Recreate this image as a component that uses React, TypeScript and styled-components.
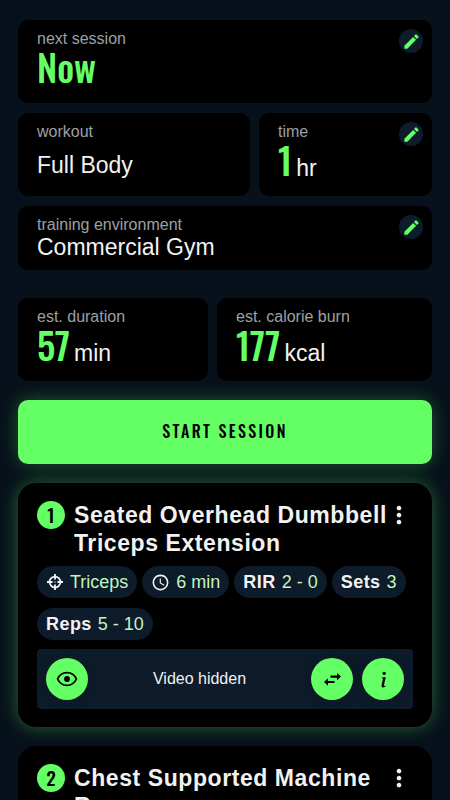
import React from "react";
import styled, { createGlobalStyle, css } from "styled-components";
import { MdEdit, MdSchedule, MdMoreVert } from "react-icons/md";
import { BsInfoLg } from "react-icons/bs";

const GREEN = "#64ff64";
const NAVY = "#0d1b2a";
const display = css`
  font-family: Oswald, "Liberation Sans Narrow", "DejaVu Sans Condensed", sans-serif;
`;

const GlobalStyle = createGlobalStyle`
  *, *::before, *::after { box-sizing: border-box; }
  body {
    margin: 0;
    background: #07111b;
    color: #f2f2f2;
    font-family: "Liberation Sans", Arial, sans-serif;
  }
  button { font: inherit; border: 0; padding: 0; cursor: pointer; }
  h2, p, ul { margin: 0; padding: 0; }
`;

const Page = styled.main`
  display: flex;
  flex-direction: column;
  gap: 19px;
  padding: 20px 18px;
  height: 100vh;
  overflow-x: hidden;
  overflow-y: auto;
  scrollbar-width: none;
`;

const Settings = styled.section`
  display: flex;
  flex-direction: column;
  flex: none;
  gap: 10px;
  padding-bottom: 9px;
`;

const Split = styled.div<{ $columns: string }>`
  display: grid;
  flex: none;
  grid-template-columns: ${(p) => p.$columns};
  gap: 9px;
`;

const InfoCard = styled.div<{ $compact?: boolean }>`
  display: flex;
  justify-content: space-between;
  min-height: ${(p) => (p.$compact ? 64 : 83)}px;
  padding: 9px 9px 9px 19px;
  border-radius: 10px;
  background: #000;
`;

const InfoText = styled.div`
  display: flex;
  flex-direction: column;
  flex: 1;
`;

const Label = styled.span`
  font-size: 16px;
  line-height: 20px;
  color: #9da0a6;
`;

const Value = styled.span<{ $center?: boolean }>`
  font-size: 23px;
  line-height: 24px;
  ${(p) => p.$center && "margin: auto 0;"}
`;

const Metric = styled.span`
  display: flex;
  align-items: baseline;
  gap: 4px;
  font-size: 23px;
  line-height: 20px;
`;

const Figure = styled.strong`
  ${display}
  font-size: 37px;
  line-height: 36px;
  font-weight: 500;
  color: ${GREEN};
`;

const EditButton = styled.button`
  display: grid;
  place-items: center;
  width: 24px;
  height: 24px;
  border-radius: 50%;
  background: ${NAVY};
  color: ${GREEN};
  font-size: 19px;
`;

const StartButton = styled.button`
  && { ${display} }
  flex: none;
  min-height: 64px;
  padding-bottom: 3px;
  border-radius: 10px;
  background: ${GREEN};
  color: #000;
  font-size: 16px;
  font-weight: 500;
  letter-spacing: 0.15em;
  box-shadow: 0 0 18px rgba(100, 255, 100, 0.3);
`;

const ExerciseCard = styled.article<{ $active?: boolean }>`
  flex: none;
  padding: 18px 19px;
  border-radius: 18px;
  background: #000;
  ${(p) => p.$active && "box-shadow: 0 0 18px rgba(100, 255, 100, 0.35);"}
`;

const ExerciseHeader = styled.header`
  display: flex;
  align-items: flex-start;
  gap: 9px;
`;

const NumberBadge = styled.span`
  ${display}
  display: grid;
  place-items: center;
  flex: none;
  width: 28px;
  height: 28px;
  padding-bottom: 2px;
  border-radius: 50%;
  background: ${GREEN};
  color: #000;
  font-size: 19px;
  line-height: 20px;
  font-weight: 500;
`;

const Title = styled.h2`
  flex: 1;
  font-size: 23px;
  line-height: 28px;
  font-weight: 700;
  letter-spacing: 0.025em;
`;

const MenuButton = styled.button`
  display: flex;
  align-items: center;
  justify-content: center;
  flex: none;
  width: 20px;
  height: 28px;
  margin: 0 4px 0 -9px;
  background: none;
  color: #f2f2f2;
  font-size: 28px;
  svg { flex: none; }
`;

const Chips = styled.ul`
  display: flex;
  flex-wrap: wrap;
  gap: 10px 5px;
  margin: 9px 0;
  list-style: none;
`;

const Chip = styled.li`
  display: flex;
  align-items: center;
  gap: 6px;
  height: 32px;
  padding: 0 9px;
  border-radius: 16px;
  background: ${NAVY};
  font-size: 18px;
  color: #c1f5c1;
  svg { color: #f2f2f2; }
  strong { color: #f2f2f2; letter-spacing: 0.025em; }
`;

const VideoBar = styled.div`
  display: flex;
  align-items: center;
  gap: 9px;
  padding: 9px;
  border-radius: 4px;
  background: ${NAVY};
`;

const VideoText = styled.p`
  flex: 1;
  text-align: center;
  font-size: 16px;
`;

const RoundButton = styled.button`
  display: grid;
  place-items: center;
  width: 42px;
  height: 42px;
  border-radius: 50%;
  background: ${GREEN};
  color: #000;
  font-size: 21px;
  box-shadow: 0 0 14px rgba(0, 0, 0, 0.2);
`;

const TargetIcon = () => (
  <svg width="18" height="18" viewBox="0 0 18 18" fill="none" stroke="currentColor" strokeWidth="1.8" aria-hidden="true">
    <circle cx="9" cy="9" r="5.4" />
    <path d="M9 1v5.6M9 11.4V17M1 9h5.6M11.4 9H17" />
    <circle cx="9" cy="9" r="0.7" fill="currentColor" stroke="none" />
  </svg>
);

const EyeIcon = () => (
  <svg width="22" height="16" viewBox="0 0 22 16" fill="none" stroke="currentColor" strokeWidth="1.8" aria-hidden="true">
    <path d="M1.6 8C3.4 3.9 6.8 1.7 11 1.7S18.6 3.9 20.4 8C18.6 12.1 15.2 14.3 11 14.3S3.4 12.1 1.6 8z" strokeLinejoin="round" />
    <circle cx="11" cy="8" r="2.9" fill="currentColor" stroke="none" />
  </svg>
);

const SwapIcon = () => (
  <svg width="17" height="13" viewBox="0 0 17 13" fill="currentColor" aria-hidden="true">
    <path d="M6.5 2.6H13V0l4 3.6-4 3.7V4.7H6.5zM10.5 8H4V5.3L0 9l4 3.7v-2.6h6.5z" />
  </svg>
);

const Edit = ({ label }: { label: string }) => (
  <EditButton aria-label={label}>
    <MdEdit />
  </EditButton>
);

const Header = ({ number, title }: { number: number; title: string }) => (
  <ExerciseHeader>
    <NumberBadge>{number}</NumberBadge>
    <Title>{title}</Title>
    <MenuButton aria-label="Exercise options">
      <MdMoreVert />
    </MenuButton>
  </ExerciseHeader>
);

export default function App() {
  return (
    <>
      <GlobalStyle />
      <Page>
        <Settings>
          <InfoCard>
            <InfoText>
              <Label>next session</Label>
              <Metric><Figure>Now</Figure></Metric>
            </InfoText>
            <Edit label="Edit next session" />
          </InfoCard>
          <Split $columns="232fr 173fr">
            <InfoCard>
              <InfoText>
                <Label>workout</Label>
                <Value $center>Full Body</Value>
              </InfoText>
            </InfoCard>
            <InfoCard>
              <InfoText>
                <Label>time</Label>
                <Metric><Figure>1</Figure>hr</Metric>
              </InfoText>
              <Edit label="Edit time" />
            </InfoCard>
          </Split>
          <InfoCard $compact>
            <InfoText>
              <Label>training environment</Label>
              <Value>Commercial Gym</Value>
            </InfoText>
            <Edit label="Edit training environment" />
          </InfoCard>
        </Settings>
        <Split $columns="190fr 215fr">
          <InfoCard>
            <InfoText>
              <Label>est. duration</Label>
              <Metric><Figure>57</Figure>min</Metric>
            </InfoText>
          </InfoCard>
          <InfoCard>
            <InfoText>
              <Label>est. calorie burn</Label>
              <Metric><Figure>177</Figure>kcal</Metric>
            </InfoText>
          </InfoCard>
        </Split>
        <StartButton>START SESSION</StartButton>
        <ExerciseCard $active>
          <Header number={1} title="Seated Overhead Dumbbell Triceps Extension" />
          <Chips>
            <Chip><TargetIcon />Triceps</Chip>
            <Chip><MdSchedule size={19} />6 min</Chip>
            <Chip><strong>RIR</strong>2 - 0</Chip>
            <Chip><strong>Sets</strong>3</Chip>
            <Chip><strong>Reps</strong>5 - 10</Chip>
          </Chips>
          <VideoBar>
            <RoundButton aria-label="Show video"><EyeIcon /></RoundButton>
            <VideoText>Video hidden</VideoText>
            <RoundButton aria-label="Swap exercise"><SwapIcon /></RoundButton>
            <RoundButton aria-label="Exercise information"><BsInfoLg /></RoundButton>
          </VideoBar>
        </ExerciseCard>
        <ExerciseCard>
          <Header number={2} title="Chest Supported Machine Row" />
        </ExerciseCard>
      </Page>
    </>
  );
}
